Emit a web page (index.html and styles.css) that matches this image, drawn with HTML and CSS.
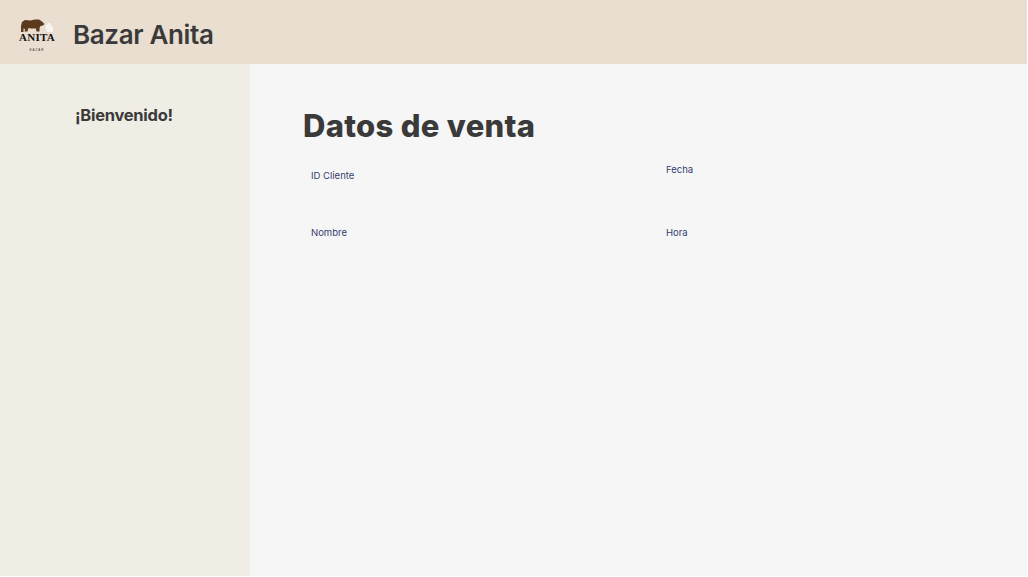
FILE: index.html
```html
<!DOCTYPE html>
<html lang="es">
<head>
<meta charset="utf-8">
<title>Bazar Anita</title>
<link rel="stylesheet" href="styles.css">
</head>
<body>
<div class="app">
  <header class="topbar">
    <div class="logo">
      <svg class="bear" viewBox="0 0 38 16" width="38" height="16" aria-hidden="true">
        <path class="bear-body" d="M3 14 L3 8 L4 4 L7 2 L12 2.500 L17 1.500 L21 1.500 L24 3.500 L26.500 6 L25 7.500 L22.500 8 L21.500 10 L21.500 13.500 L18.500 13.500 L18 10.500 L13 10.500 L10.500 10 L9.500 13.500 L6.500 13.500 L7 11 L5.500 10.500 L5.500 14 Z"/>
        <path class="bear-cub" d="M27 9 L28.500 6.500 L30 5 L32 5 L33.500 7 L35 10 L35 14 L29 14 L28 11 Z"/>
      </svg>
      <span class="logo-name">ANITA</span>
      <span class="logo-sub">BAZAR</span>
    </div>
    <h1 class="brand">Bazar Anita</h1>
  </header>
  <div class="body">
    <aside class="sidebar">
      <p class="welcome">¡Bienvenido!</p>
    </aside>
    <main class="content">
      <h2 class="title">Datos de venta</h2>
      <div class="fields">
        <div class="field field-id">ID Cliente</div>
        <div class="field field-fecha">Fecha</div>
        <div class="field">Nombre</div>
        <div class="field">Hora</div>
      </div>
    </main>
  </div>
</div>
</body>
</html>
```
FILE: styles.css
```css
* { box-sizing: border-box; }
html, body { margin: 0; padding: 0; background: #fff; }
body { font-family: "Inter", "Liberation Sans", sans-serif; }
.app {
  width: 1027px;
  height: 576px;
  display: flex;
  flex-direction: column;
  overflow: hidden;
}
.topbar {
  height: 64px;
  background: #e9decf;
  display: flex;
  align-items: center;
  padding-left: 18px;
  gap: 17px;
  flex: none;
}
.logo {
  width: 38px;
  display: flex;
  flex-direction: column;
  align-items: center;
  margin-top: 6px;
}
.bear { display: block; margin-bottom: -2px; }
.bear-body { fill: #5b3a1e; }
.bear-cub { fill: #f7f5f0; }
.logo-name {
  font-family: "Liberation Serif", serif;
  font-weight: 700;
  font-size: 11px;
  line-height: 11px;
  letter-spacing: 0.3px;
  color: #111;
}
.logo-sub {
  font-family: "Liberation Sans", sans-serif;
  font-size: 3px;
  line-height: 4px;
  letter-spacing: 1px;
  margin-top: 5px;
  color: #333;
}
.brand {
  margin: 6px 0 0;
  font-size: 26px;
  line-height: 34px;
  font-weight: 600;
  letter-spacing: -0.360px;
  color: #3a3a3a;
}
.body { flex: 1; display: flex; min-height: 0; }
.sidebar {
  width: 250px;
  flex: none;
  background: #f0ede5;
  padding: 41px 0 0 75px;
}
.welcome {
  margin: 0;
  font-size: 16.500px;
  line-height: 20px;
  font-weight: 700;
  letter-spacing: -0.270px;
  color: #3a3a3a;
}
.content {
  flex: 1;
  background: #f6f6f6;
  padding: 43px 0 0 53px;
}
.title {
  margin: 0;
  font-size: 31px;
  line-height: 38px;
  font-weight: 800;
  letter-spacing: 0.300px;
  color: #3a3a3a;
}
.fields {
  display: grid;
  grid-template-columns: 355px 1fr;
  grid-auto-rows: 57px;
  padding: 0 0 0 8px;
  margin-top: 20px;
}
.field {
  font-size: 9.500px;
  line-height: 14px;
  color: #343e70;
  padding-top: 4px;
}
.field-fecha { padding-top: 0; margin-top: -2px; }
```
